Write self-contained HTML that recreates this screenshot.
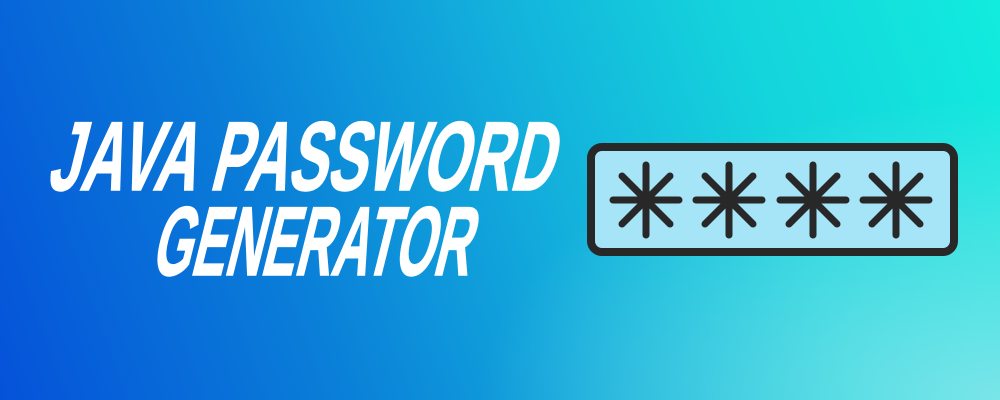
<!DOCTYPE html>
<html><head><meta charset="utf-8"><style>
html,body{margin:0;padding:0;width:1000px;height:400px;overflow:hidden}
body{background:
radial-gradient(ellipse 520px 300px at 1000px 400px, rgba(140,230,235,0.85), rgba(140,230,235,0) 100%),
linear-gradient(70deg,#0552d9 0%,#0a7fd8 30%,#13b0dc 55%,#14d2dc 75%,#12ecde 100%);}
svg{position:absolute;left:0;top:0}
</style></head><body>
<svg width="1000" height="400" viewBox="0 0 1000 400">
<g font-family="'Liberation Sans Narrow','Liberation Sans',sans-serif" font-weight="bold" fill="#fff" stroke="#fff" stroke-width="1.5">
<text x="0" y="0" font-size="98" textLength="505" lengthAdjust="spacingAndGlyphs" transform="translate(46,190) skewX(-14)">JAVA PASSWORD</text>
<text x="0" y="0" font-size="98" textLength="318" lengthAdjust="spacingAndGlyphs" transform="translate(150,275) skewX(-14)">GENERATOR</text>
</g>
<rect x="591" y="147" width="363" height="105" rx="11" fill="#a6e4f8" stroke="#282828" stroke-width="8"/>
<g stroke="#282828" stroke-width="7" stroke-linecap="round">
<g transform="translate(646,200)"><line x1="-33" y1="0" x2="33" y2="0"/><line x1="0" y1="-35" x2="0" y2="35"/><line x1="-24" y1="-24" x2="24" y2="24"/><line x1="-24" y1="24" x2="24" y2="-24"/></g>
<g transform="translate(729,200)"><line x1="-33" y1="0" x2="33" y2="0"/><line x1="0" y1="-35" x2="0" y2="35"/><line x1="-24" y1="-24" x2="24" y2="24"/><line x1="-24" y1="24" x2="24" y2="-24"/></g>
<g transform="translate(813,200)"><line x1="-33" y1="0" x2="33" y2="0"/><line x1="0" y1="-35" x2="0" y2="35"/><line x1="-24" y1="-24" x2="24" y2="24"/><line x1="-24" y1="24" x2="24" y2="-24"/></g>
<g transform="translate(896,200)"><line x1="-33" y1="0" x2="33" y2="0"/><line x1="0" y1="-35" x2="0" y2="35"/><line x1="-24" y1="-24" x2="24" y2="24"/><line x1="-24" y1="24" x2="24" y2="-24"/></g>
</g>
</svg>
</body></html>
